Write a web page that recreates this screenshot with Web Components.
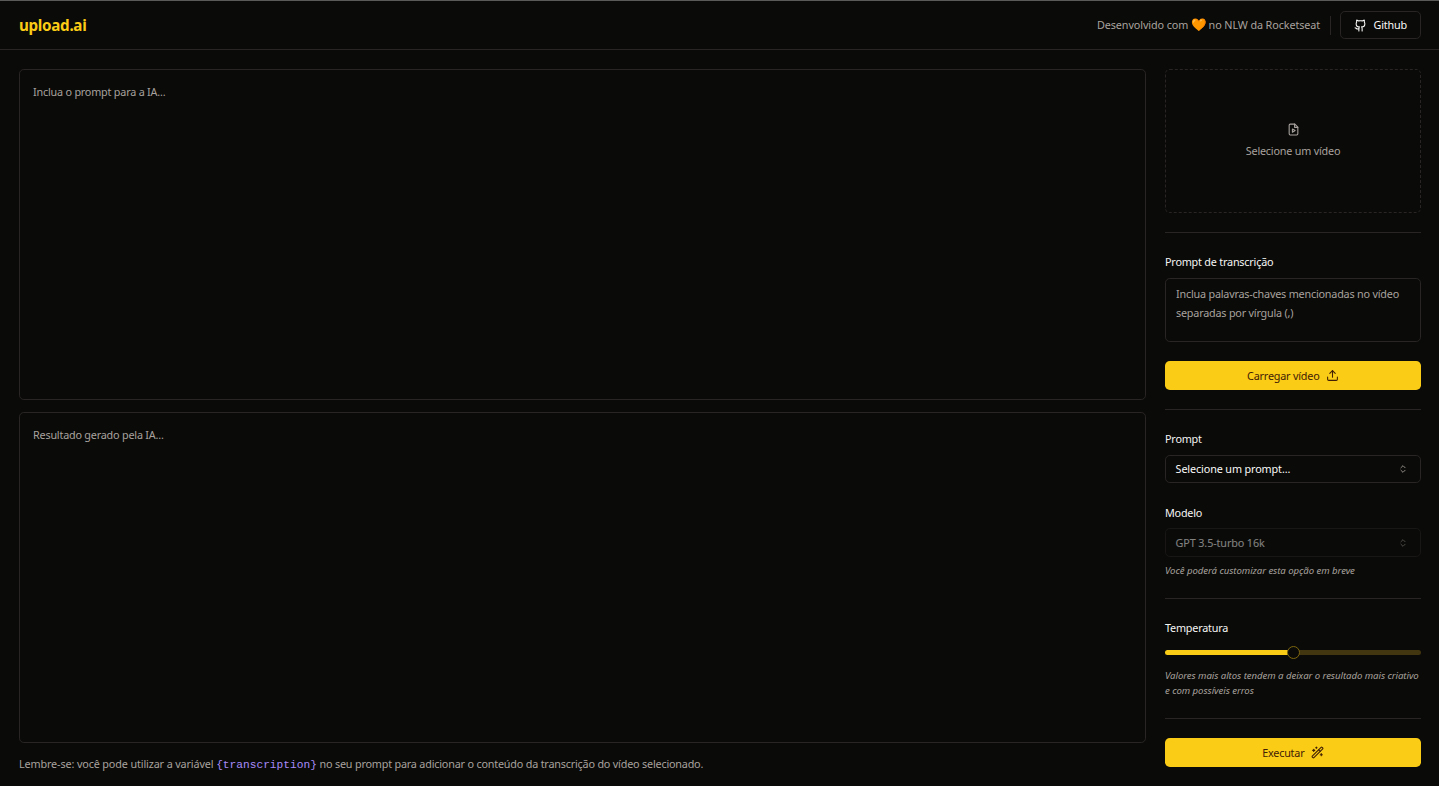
<!DOCTYPE html>
<html lang="pt-BR">
<head>
<meta charset="utf-8">
<title>upload.ai</title>
<style>
  html, body { margin: 0; height: 100%; }
  body {
    background: #0a0a08;
    color: #fafaf9;
    font: 10.8px/1.4 "Noto Sans", "Liberation Sans", sans-serif;
    letter-spacing: -0.2px;
    border-top: 1px solid #5a5a58;
    box-sizing: border-box;
    overflow: hidden;
  }
</style>
</head>
<body>
<app-root>
  <app-header></app-header>
  <app-main>
    <text-panel slot="left">Inclua o prompt para a IA...</text-panel>
    <text-panel slot="left">Resultado gerado pela IA...</text-panel>
    <app-note slot="left"></app-note>
    <video-form slot="right"></video-form>
    <ui-sep slot="right" style="margin: 0"></ui-sep>
    <prompt-form slot="right"></prompt-form>
  </app-main>
</app-root>

<script>
const ICONS = {
  github: '<path d="M15 22v-4a4.8 4.8 0 0 0-1-3.5c3 0 6-2 6-5.5.08-1.25-.27-2.48-1-3.5.28-1.15.28-2.35 0-3.5 0 0-1 0-3 1.5-2.64-.5-5.36-.5-8 0C6 2 5 2 5 2c-.3 1.15-.3 2.35 0 3.5A5.403 5.403 0 0 0 4 9c0 3.5 3 5.5 6 5.5-.39.49-.68 1.05-.85 1.65-.17.6-.22 1.23-.15 1.85v4"/><path d="M9 18c-4.51 2-5-2-7-2"/>',
  fileVideo: '<path d="M14.5 2H6a2 2 0 0 0-2 2v16a2 2 0 0 0 2 2h12a2 2 0 0 0 2-2V7.5L14.5 2z"/><polyline points="14 2 14 8 20 8"/><path d="m10 11 5 3-5 3v-6z"/>',
  upload: '<path d="M21 15v4a2 2 0 0 1-2 2H5a2 2 0 0 1-2-2v-4"/><polyline points="17 8 12 3 7 8"/><line x1="12" x2="12" y1="3" y2="15"/>',
  wand: '<path d="m21.64 3.64-1.28-1.28a1.21 1.21 0 0 0-1.72 0L2.36 18.64a1.21 1.21 0 0 0 0 1.72l1.28 1.28a1.2 1.2 0 0 0 1.72 0L21.64 5.36a1.2 1.2 0 0 0 0-1.72Z"/><path d="m14 7 3 3"/><path d="M5 6v4"/><path d="M19 14v4"/><path d="M10 2v2"/><path d="M7 8H3"/><path d="M21 16h-4"/><path d="M11 3H9"/>',
  chevrons: '<path d="m7 15 5 5 5-5"/><path d="m7 9 5-5 5 5"/>'
};

/** Base class: fills an open shadow root from a string. */
class Base extends HTMLElement {
  render(html) {
    this.attachShadow({ mode: 'open' });
    const template = document.createElement('template');
    template.innerHTML = html;
    this.shadowRoot.appendChild(template.content.cloneNode(true));
  }
}

class UiIcon extends Base {
  constructor() {
    super();
    this.attachShadow({ mode: 'open' });
  }
  connectedCallback() {
    const size = this.getAttribute('size') || 13;
    const stroke = this.getAttribute('stroke') || 2;
    this.shadowRoot.innerHTML = `
      <style>:host { display: inline-flex; flex: none; } svg { display: block; }</style>
      <svg width="${size}" height="${size}" viewBox="0 0 24 24" fill="none" stroke="currentColor"
        stroke-width="${stroke}" stroke-linecap="round" stroke-linejoin="round">${ICONS[this.getAttribute('name')]}</svg>`;
  }
}

class UiSep extends Base {
  constructor() {
    super();
    this.render(`<style>:host { display: block; height: 1px; background: #292524; flex: none; }</style>`);
  }
}

class UiButton extends Base {
  constructor() {
    super();
    this.render(`
      <style>
        :host {
          display: flex; align-items: center; justify-content: center; gap: 6.4px;
          height: 29px; border-radius: 4.8px; flex: none;
          background: #facc15; color: #422006;
        }
        :host([outline]) {
          background: transparent; color: #fafaf9; border: 1px solid #292524;
          box-sizing: border-box; height: 28px; width: 81px;
        }
      </style>
      <slot></slot>`);
  }
}

class UiLabel extends Base {
  constructor() {
    super();
    this.render(`
      <style>:host { display: block; line-height: 14px; color: #f5f5f4; }</style>
      <slot></slot>`);
  }
}

class UiHint extends Base {
  constructor() {
    super();
    this.render(`
      <style>
        :host {
          display: block; font-size: 9.6px; line-height: 15px; font-style: italic;
          letter-spacing: -0.05px; color: #a8a29e;
        }
      </style>
      <slot></slot>`);
  }
}

class UiSelect extends Base {
  constructor() {
    super();
    this.render(`
      <style>
        :host {
          display: flex; align-items: center; justify-content: space-between;
          box-sizing: border-box; height: 28px; padding: 0 11.6px 0 9.6px;
          border: 1px solid #292524; border-radius: 4.8px; color: #fafaf9;
          letter-spacing: -0.12px;
        }
        :host([disabled]) { opacity: .5; }
        ui-icon { color: #a8a29e; }
      </style>
      <slot></slot><ui-icon name="chevrons" size="10"></ui-icon>`);
  }
}

class UiSlider extends Base {
  constructor() {
    super();
    this.render(`
      <style>
        :host { display: flex; align-items: center; height: 13px; flex: none; }
        .fill { height: 5px; flex: 1; background: #facc15; border-radius: 3px 0 0 3px; }
        .rest { height: 5px; flex: 1; background: #423610; border-radius: 0 3px 3px 0; }
        .thumb {
          width: 13px; height: 13px; box-sizing: border-box; flex: none; margin: 0 -6.5px; z-index: 1;
          border: 1.6px solid #7d660f; border-radius: 50%; background: #0a0a08;
        }
      </style>
      <div class="fill"></div><div class="thumb"></div><div class="rest"></div>`);
  }
}

class AppHeader extends Base {
  constructor() {
    super();
    this.render(`
      <style>
        :host {
          display: flex; align-items: center; justify-content: space-between;
          height: 48px; padding: 0 18px 0 19px; border-bottom: 1px solid #292524; flex: none;
        }
        h1 { margin: 0; font-size: 15.2px; font-weight: 700; color: #facc15; line-height: 20px; letter-spacing: -0.3px; }
        .right { display: flex; align-items: center; gap: 9px; }
        .made { color: #a8a29e; margin-right: 1px; letter-spacing: -0.1px; }
        .heart { font-size: 12.4px; letter-spacing: 0; }
        .bar { width: 1px; height: 19px; background: #292524; }
      </style>
      <h1>upload.ai</h1>
      <div class="right">
        <span class="made">Desenvolvido com <span class="heart">🧡</span> no NLW da Rocketseat</span>
        <div class="bar"></div>
        <ui-button outline><ui-icon name="github" size="13"></ui-icon>Github</ui-button>
      </div>`);
  }
}

class TextPanel extends Base {
  constructor() {
    super();
    this.render(`
      <style>
        :host {
          display: block; flex: 1; min-height: 0; box-sizing: border-box;
          padding: 14px 13px; border: 1px solid #292524; border-radius: 4.8px;
          color: #a8a29e; line-height: 16px;
        }
      </style>
      <slot></slot>`);
  }
}

class AppNote extends Base {
  constructor() {
    super();
    this.render(`
      <style>
        :host { display: block; color: #a8a29e; height: 12px; line-height: 18px; flex: none; letter-spacing: -0.125px; }
        code { font-family: "Liberation Mono", monospace; color: #a78bfa; font-size: 11.2px; letter-spacing: 0; }
        .tail { letter-spacing: -0.19px; }
      </style>
      Lembre-se: você pode utilizar a variável <code>{transcription}</code> <span class="tail">no seu prompt para adicionar o conteúdo da transcrição do vídeo selecionado.</span>`);
  }
}

class VideoForm extends Base {
  constructor() {
    super();
    this.render(`
      <style>
        :host { display: flex; flex-direction: column; flex: none; }
        .drop {
          height: 144px; box-sizing: border-box; display: flex; flex-direction: column;
          align-items: center; justify-content: center; gap: 7px;
          border: 1px dashed #292524; border-radius: 4.8px; color: #a8a29e;
        }
        ui-sep { margin: 19px 0; }
        .prompt {
          box-sizing: border-box; height: 64px; margin: 9px 0 19px; padding: 5px 10px;
          border: 1px solid #292524; border-radius: 4.8px; color: #a8a29e; line-height: 19px;
        }
      </style>
      <div class="drop">
        <ui-icon name="fileVideo" size="13"></ui-icon>
        Selecione um vídeo
      </div>
      <ui-sep></ui-sep>
      <ui-label style="margin-top: 3px">Prompt de transcrição</ui-label>
      <div class="prompt">Inclua palavras-chaves mencionadas no vídeo separadas por vírgula (,)</div>
      <ui-button>Carregar vídeo <ui-icon name="upload" size="13"></ui-icon></ui-button>`);
  }
}

class PromptForm extends Base {
  constructor() {
    super();
    this.render(`
      <style>
        :host { display: flex; flex-direction: column; flex: 1; min-height: 0; }
        ui-sep { margin: 19px 0; }
      </style>
      <ui-label style="margin-top: 3px">Prompt</ui-label>
      <ui-select style="margin-top: 9px">Selecione um prompt...</ui-select>
      <ui-label style="margin-top: 23px">Modelo</ui-label>
      <ui-select style="margin-top: 8px; height: 29px" disabled>GPT 3.5-turbo 16k</ui-select>
      <ui-hint style="margin-top: 6px">Você poderá customizar esta opção em breve</ui-hint>
      <ui-sep style="margin-top: 20px"></ui-sep>
      <ui-label style="margin-top: 3px">Temperatura</ui-label>
      <ui-slider style="margin-top: 11px"></ui-slider>
      <ui-hint style="margin-top: 9px">Valores mais altos tendem a deixar o resultado mais criativo e com possíveis erros</ui-hint>
      <ui-sep style="margin-top: 20px"></ui-sep>
      <ui-button>Executar <ui-icon name="wand" size="13"></ui-icon></ui-button>`);
  }
}

class AppMain extends Base {
  constructor() {
    super();
    this.render(`
      <style>
        :host { display: flex; flex: 1; min-height: 0; gap: 19px; padding: 19px 18px 19px 19px; }
        .left { flex: 1; min-width: 0; display: flex; flex-direction: column; gap: 12px; }
        .right { width: 256px; flex: none; display: flex; flex-direction: column; gap: 19px; }
      </style>
      <div class="left"><slot name="left"></slot></div>
      <aside class="right"><slot name="right"></slot></aside>`);
  }
}

class AppRoot extends Base {
  constructor() {
    super();
    this.render(`
      <style>:host { display: flex; flex-direction: column; height: 785px; }</style>
      <slot></slot>`);
  }
}

customElements.define('ui-icon', UiIcon);
customElements.define('ui-sep', UiSep);
customElements.define('ui-button', UiButton);
customElements.define('ui-label', UiLabel);
customElements.define('ui-hint', UiHint);
customElements.define('ui-select', UiSelect);
customElements.define('ui-slider', UiSlider);
customElements.define('app-header', AppHeader);
customElements.define('text-panel', TextPanel);
customElements.define('app-note', AppNote);
customElements.define('video-form', VideoForm);
customElements.define('prompt-form', PromptForm);
customElements.define('app-main', AppMain);
customElements.define('app-root', AppRoot);
</script>
</body>
</html>
